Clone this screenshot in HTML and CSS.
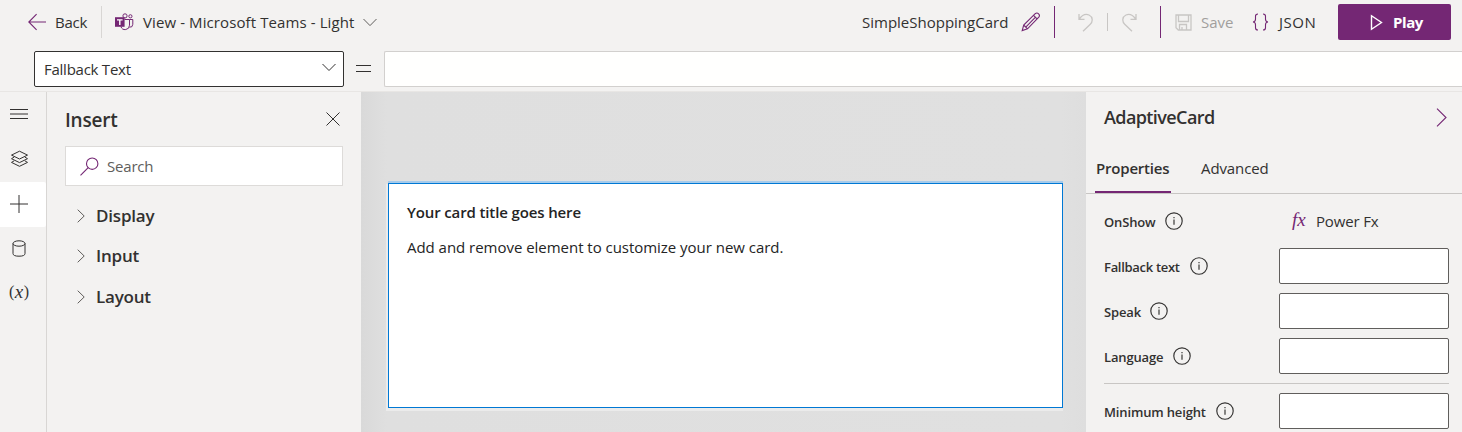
FILE: index.html
```html
<!DOCTYPE html>
<html lang="en">
<head>
<meta charset="utf-8">
<title>SimpleShoppingCard</title>
<link rel="stylesheet" href="styles.css">
</head>
<body>
<div class="app">
  <header class="topbar">
    <div class="back">
      <svg class="icon purple" width="18" height="18" viewBox="0 0 18 18"><path d="M.8 9H18M8.6 1.2.8 9l7.8 7.8"/></svg>
      <span class="t-back">Back</span>
    </div>
    <div class="view">
      <svg class="teams" width="19" height="18" viewBox="0 0 19 18"><g fill="none" stroke="#742774"><circle cx="10" cy="2.9" r="2.1"/><circle cx="15.4" cy="3.3" r="1.6"/><path d="M9.5 6.5h5v5.700a4.400 4.400 0 0 1-8.600 1.300M14.500 6.500h3.300v4.800a3 3 0 0 1-3.400 2.900"/></g><path fill="#742774" d="M0 4.200h9.600v9.600H0z"/><path fill="#fff" d="M2 6.200h5.600v1.400H5.500V12H4.100V7.600H2z"/></svg>
      <span class="t-view">View - Microsoft Teams - Light</span>
      <svg class="icon gray" width="14" height="9" viewBox="0 0 14 9"><path d="m.5 1 6.500 6.600L13.500 1"/></svg>
    </div>
    <div class="actions">
      <span class="t-name">SimpleShoppingCard</span>
      <svg class="icon purple pencil" width="20" height="20" viewBox="0 0 20 20"><path d="m1.200 18.600 1.500-5.600L14.200 1.700q1.800-1.400 3.400.1t.2 3.400L6.500 16.800zM2.700 13l3.800 3.800M12.600 3.300l3.700 3.800M5 14.800l9.300-9.500"/></svg>
      <i class="rule"></i>
      <svg class="icon off undo" width="15" height="19" viewBox="0 0 15 19"><path d="M1 1v5.300h5.500M1.300 6C4 2.200 7.500.5 11 2c4 2 4 6.500 1.300 9.200L5 18.300"/></svg>
      <i class="rule-small"></i>
      <svg class="icon off redo" width="15" height="19" viewBox="0 0 15 19"><path d="M14 1v5.300H8.500M13.700 6C11 2.200 7.500.5 4 2 0 4 0 8.500 2.700 11.200L10 18.300"/></svg>
      <i class="rule rule-save"></i>
      <svg class="icon off save" width="17" height="17" viewBox="0 0 17 17"><path d="M1 1h15v15H3.300L1 13.700zM3.500 1v6.500h10V1M4.500 16v-5.500h7V16M7 16v-3"/></svg>
      <span class="t-save">Save</span>
      <svg class="icon purple braces" width="17" height="18" viewBox="0 0 17 18"><path d="M6 1Q3.500 1 3.500 3.300v3Q3.500 8.800 1 9q2.500.2 2.500 2.700v3Q3.500 17 6 17M11 1q2.500 0 2.500 2.300v3q0 2.500 2.500 2.700-2.500.2-2.500 2.700v3q0 2.300-2.500 2.300"/></svg>
      <span class="t-json">JSON</span>
      <button class="play"><svg width="13" height="17" viewBox="0 0 13 17"><path d="M1.500 1.700v13.600l10-6.800z"/></svg><span>Play</span></button>
    </div>
  </header>
  <div class="formula">
    <div class="select"><span>Fallback Text</span><svg class="icon" width="14" height="9" viewBox="0 0 14 9"><path d="m.5 1 6.500 6.500L13.500 1"/></svg></div>
    <svg class="equals" width="15" height="8" viewBox="0 0 15 8"><path d="M0 .5h15M0 6.500h15"/></svg>
    <div class="expression"></div>
  </div>
  <main class="workspace">
    <nav class="rail">
      <div><svg class="icon" width="18" height="10" viewBox="0 0 18 10"><path d="M0 .5h18M0 5h18M0 9.500h18"/></svg></div>
      <div><svg class="icon" width="19" height="18" viewBox="0 0 19 18"><path d="m9.500 1.200 8 3.900-8 3.900-8-3.900zM4.200 7 1.500 8.700l8 3.900 8-3.900L14.800 7M4.200 10.800l-2.700 1.600 8 3.900 8-3.900-2.700-1.600"/></svg></div>
      <div class="current"><svg class="icon" width="18" height="18" viewBox="0 0 18 18"><path d="M0 9h18M9 0v18"/></svg></div>
      <div><svg class="icon" width="14" height="17" viewBox="0 0 14 17"><ellipse cx="7" cy="3.500" rx="6" ry="2.700"/><path d="M1 3.500v10q0 2.700 6 2.700t6-2.700v-10"/></svg></div>
      <div class="variable">(<i>x</i>)</div>
    </nav>
    <section class="insert">
      <div class="insert-head"><h2>Insert</h2><svg class="icon" width="14" height="14" viewBox="0 0 14 14"><path d="m.5.5 13 13M13.500.5l-13 13"/></svg></div>
      <div class="search"><svg class="icon purple" width="19" height="19" viewBox="0 0 19 19"><circle cx="12.200" cy="6.700" r="5.700"/><path d="m8.200 10.700-7.700 7.700"/></svg><span>Search</span></div>
      <div class="group"><svg class="icon gray" width="8" height="14" viewBox="0 0 8 14"><path d="m.7.700 6.500 6.300-6.500 6.300"/></svg><span class="t-display">Display</span></div>
      <div class="group"><svg class="icon gray" width="8" height="14" viewBox="0 0 8 14"><path d="m.7.700 6.500 6.300-6.500 6.300"/></svg><span class="t-input">Input</span></div>
      <div class="group"><svg class="icon gray" width="8" height="14" viewBox="0 0 8 14"><path d="m.7.700 6.500 6.300-6.500 6.300"/></svg><span class="t-layout">Layout</span></div>
    </section>
    <section class="canvas">
      <div class="card"><h3>Your card title goes here</h3><p>Add and remove element to customize your new card.</p></div>
    </section>
    <aside class="props">
      <div class="props-head"><h2>AdaptiveCard</h2><svg class="icon purple" width="11" height="19" viewBox="0 0 11 19"><path d="m1 .7 9 8.800-9 8.800"/></svg></div>
      <div class="tabs"><span class="tab selected">Properties</span><span class="tab advanced">Advanced</span></div>
      <div class="fields">
        <div class="field"><label class="l-onshow">OnShow</label><svg class="icon info" width="18" height="18" viewBox="0 0 18 18"><circle cx="9" cy="9" r="8.200"/><path d="M9 7.500v5.300M9 5v1.300"/></svg><div class="fx"><i>fx</i><span>Power Fx</span></div></div>
        <div class="field"><label class="l-fallback">Fallback text</label><svg class="icon info" width="18" height="18" viewBox="0 0 18 18"><circle cx="9" cy="9" r="8.200"/><path d="M9 7.500v5.300M9 5v1.300"/></svg><div class="box"></div></div>
        <div class="field"><label class="l-speak">Speak</label><svg class="icon info" width="18" height="18" viewBox="0 0 18 18"><circle cx="9" cy="9" r="8.200"/><path d="M9 7.500v5.300M9 5v1.300"/></svg><div class="box"></div></div>
        <div class="field"><label class="l-language">Language</label><svg class="icon info" width="18" height="18" viewBox="0 0 18 18"><circle cx="9" cy="9" r="8.200"/><path d="M9 7.500v5.300M9 5v1.300"/></svg><div class="box"></div></div>
        <hr>
        <div class="field"><label class="l-height">Minimum height</label><svg class="icon info" width="18" height="18" viewBox="0 0 18 18"><circle cx="9" cy="9" r="8.200"/><path d="M9 7.500v5.300M9 5v1.300"/></svg><div class="box"></div></div>
      </div>
    </aside>
  </main>
</div>
</body>
</html>
```
FILE: styles.css
```css
* { box-sizing: border-box; }
body { margin: 0; overflow: hidden; background: #f3f2f1; color: #323130; font: 15px/20px "Segoe UI", "Open Sans", "Noto Sans", sans-serif; }
h2, h3, p { margin: 0; }
span, label, h2, h3, p { white-space: nowrap; }
svg { display: block; flex: none; }
.app { width: 1462px; height: 432px; display: flex; flex-direction: column; overflow: hidden; }
.icon { fill: none; stroke: #323130; stroke-width: 1; }
.purple { stroke: #742774; stroke-width: 1.1; }
.gray { stroke: #605e5c; }
.off { stroke: #c8c6c4; stroke-width: 1.3; }

.topbar { height: 51px; flex: none; display: flex; align-items: flex-start; }
.back { display: flex; align-items: center; width: 102px; height: 32px; margin-top: 6px; padding-left: 28px; border-right: 1px solid #d8d6d4; }
.back span { margin-left: 9px; letter-spacing: -.2px; }
.view { display: flex; align-items: center; height: 44px; padding-left: 13px; }
.view span { margin-left: 9px; width: 212px; letter-spacing: .1px; }
.view .gray { margin-left: 8px; }
.actions { margin-left: auto; padding-right: 11px; display: flex; align-items: center; height: 44px; }
.t-name { width: 147px; }
.pencil { margin-left: 12px; }
.rule { width: 1px; height: 32px; margin-left: 13px; background: #742774; }
.undo { margin-left: 23px; }
.rule-small { width: 1px; height: 18px; margin-left: 14px; background: #c8c6c4; }
.redo { margin-left: 14px; }
.rule-save { margin-left: 23px; }
.save { margin-left: 14px; }
.t-save { width: 34px; margin-left: 9px; color: #a19f9d; }
.braces { margin-left: 17px; }
.t-json { width: 38px; margin-left: 10px; letter-spacing: .5px; }
.play { width: 113px; height: 36px; margin-left: 21px; border: 0; border-radius: 2px; padding: 0 0 0 32px; display: flex; align-items: center; gap: 10px; background: #742774; color: #fff; font: 700 15px/20px "Open Sans", sans-serif; letter-spacing: -.4px; }
.play path { fill: none; stroke: #fff; stroke-width: 1.4; }

.formula { height: 41px; flex: none; display: flex; padding-left: 34px; border-bottom: 1px solid #e8e6e4; }
.select { width: 310px; height: 36px; border: 1px solid #323130; border-radius: 2px; background: #fff; display: flex; align-items: center; justify-content: space-between; padding: 0 7px 0 9px; letter-spacing: -.25px; }
.select svg { margin-top: -4px; }
.equals { margin: 14px 13px 0 12px; stroke: #323130; }
.expression { flex: 1; height: 36px; background: #fffffe; border: 1px solid #d2d0ce; border-right: 0; border-radius: 2px 0 0 2px; }

.workspace { flex: 1; min-height: 0; display: flex; }
.rail { width: 47px; border-right: 1px solid #d8d6d4; }
.rail div { height: 45px; display: flex; align-items: center; justify-content: center; padding: 0 8px 2px 0; }
.rail .current { background: #fff; border-radius: 0 2px 2px 0; }
.rail .variable { font: 16px/20px "Liberation Serif", serif; padding-bottom: 5px; }
.variable i { font-size: 19px; margin: 0 .5px; }
.insert { width: 314px; padding: 14px 18px 0; }
.insert-head { height: 28px; display: flex; align-items: center; justify-content: space-between; padding-right: 3px; }
.insert-head svg { margin-top: -2px; }
h2 { font-size: 19px; font-weight: 600; line-height: 28px; letter-spacing: -.2px; }
.search { height: 40px; margin: 12px 0 9.500px; background: #fff; border: 1px solid #dddbd9; display: flex; align-items: center; padding-left: 14px; color: #605e5c; letter-spacing: -.2px; }
.search span { margin-left: 8px; }
.group { height: 40.500px; display: flex; align-items: center; padding-left: 12px; gap: 11px; font-size: 17px; font-weight: 600; letter-spacing: -.2px; }
.canvas { width: 725px; background: linear-gradient(90deg, #d9d9d9, #dfdfdf 26px, #e0e0e0 700px, #dedede); padding: 91px 0 0 27px; }
.card { width: 675px; height: 225px; border: 1px solid #0078d4; background: #fff; padding: 17px 18px; box-shadow: -1px 2px 0 1px #ebebeb, 0 -2px 0 #a6cbeb; color: #242424; }
.card h3 { font-size: 15px; font-weight: 600; line-height: 22px; letter-spacing: -.13px; }
.card p { margin-top: 13px; line-height: 22px; letter-spacing: -.03px; }

.props { width: 376px; }
.props-head { height: 51px; display: flex; align-items: center; justify-content: space-between; padding: 0 15px 0 18px; }
.props h2 { font-size: 18px; letter-spacing: -.6px; margin-top: -1px; }
.tabs { height: 51px; border-bottom: 1px solid #c8c6c4; display: flex; padding-left: 9px; }
.tab { height: 50px; line-height: 50px; }
.selected { width: 76px; padding-left: 1px; font-weight: 600; letter-spacing: -.2px; border-bottom: 2px solid #742774; }
.advanced { margin-left: 30px; letter-spacing: -.1px; }
.fields { display: grid; gap: 9px; padding: 9px 13px 0 18px; }
.field { height: 36px; display: flex; align-items: center; }
.field label { font-size: 13px; font-weight: 600; margin-top: 2px; letter-spacing: -.15px; }
.field .l-fallback { letter-spacing: -.3px; }
.info { margin: -1px 0 0 9px; stroke-width: 1.15; }
.l-onshow { width: 52px; }
.l-fallback { width: 77px; }
.l-speak { width: 37px; }
.l-language { width: 60px; }
.l-height { width: 103px; }
.box, .fx { width: 170px; height: 36px; margin-left: auto; }
.box { border: 1px solid #605e5c; border-radius: 2px; background: #fff; }
.fx { display: flex; align-items: center; padding-left: 13px; letter-spacing: -.15px; }
.fx i { width: 24px; font: italic 19px/20px "Liberation Serif", serif; color: #742774; margin-top: -3px; }
hr { width: 100%; height: 1px; margin: 0; border: 0; background: #c8c6c4; }
```
